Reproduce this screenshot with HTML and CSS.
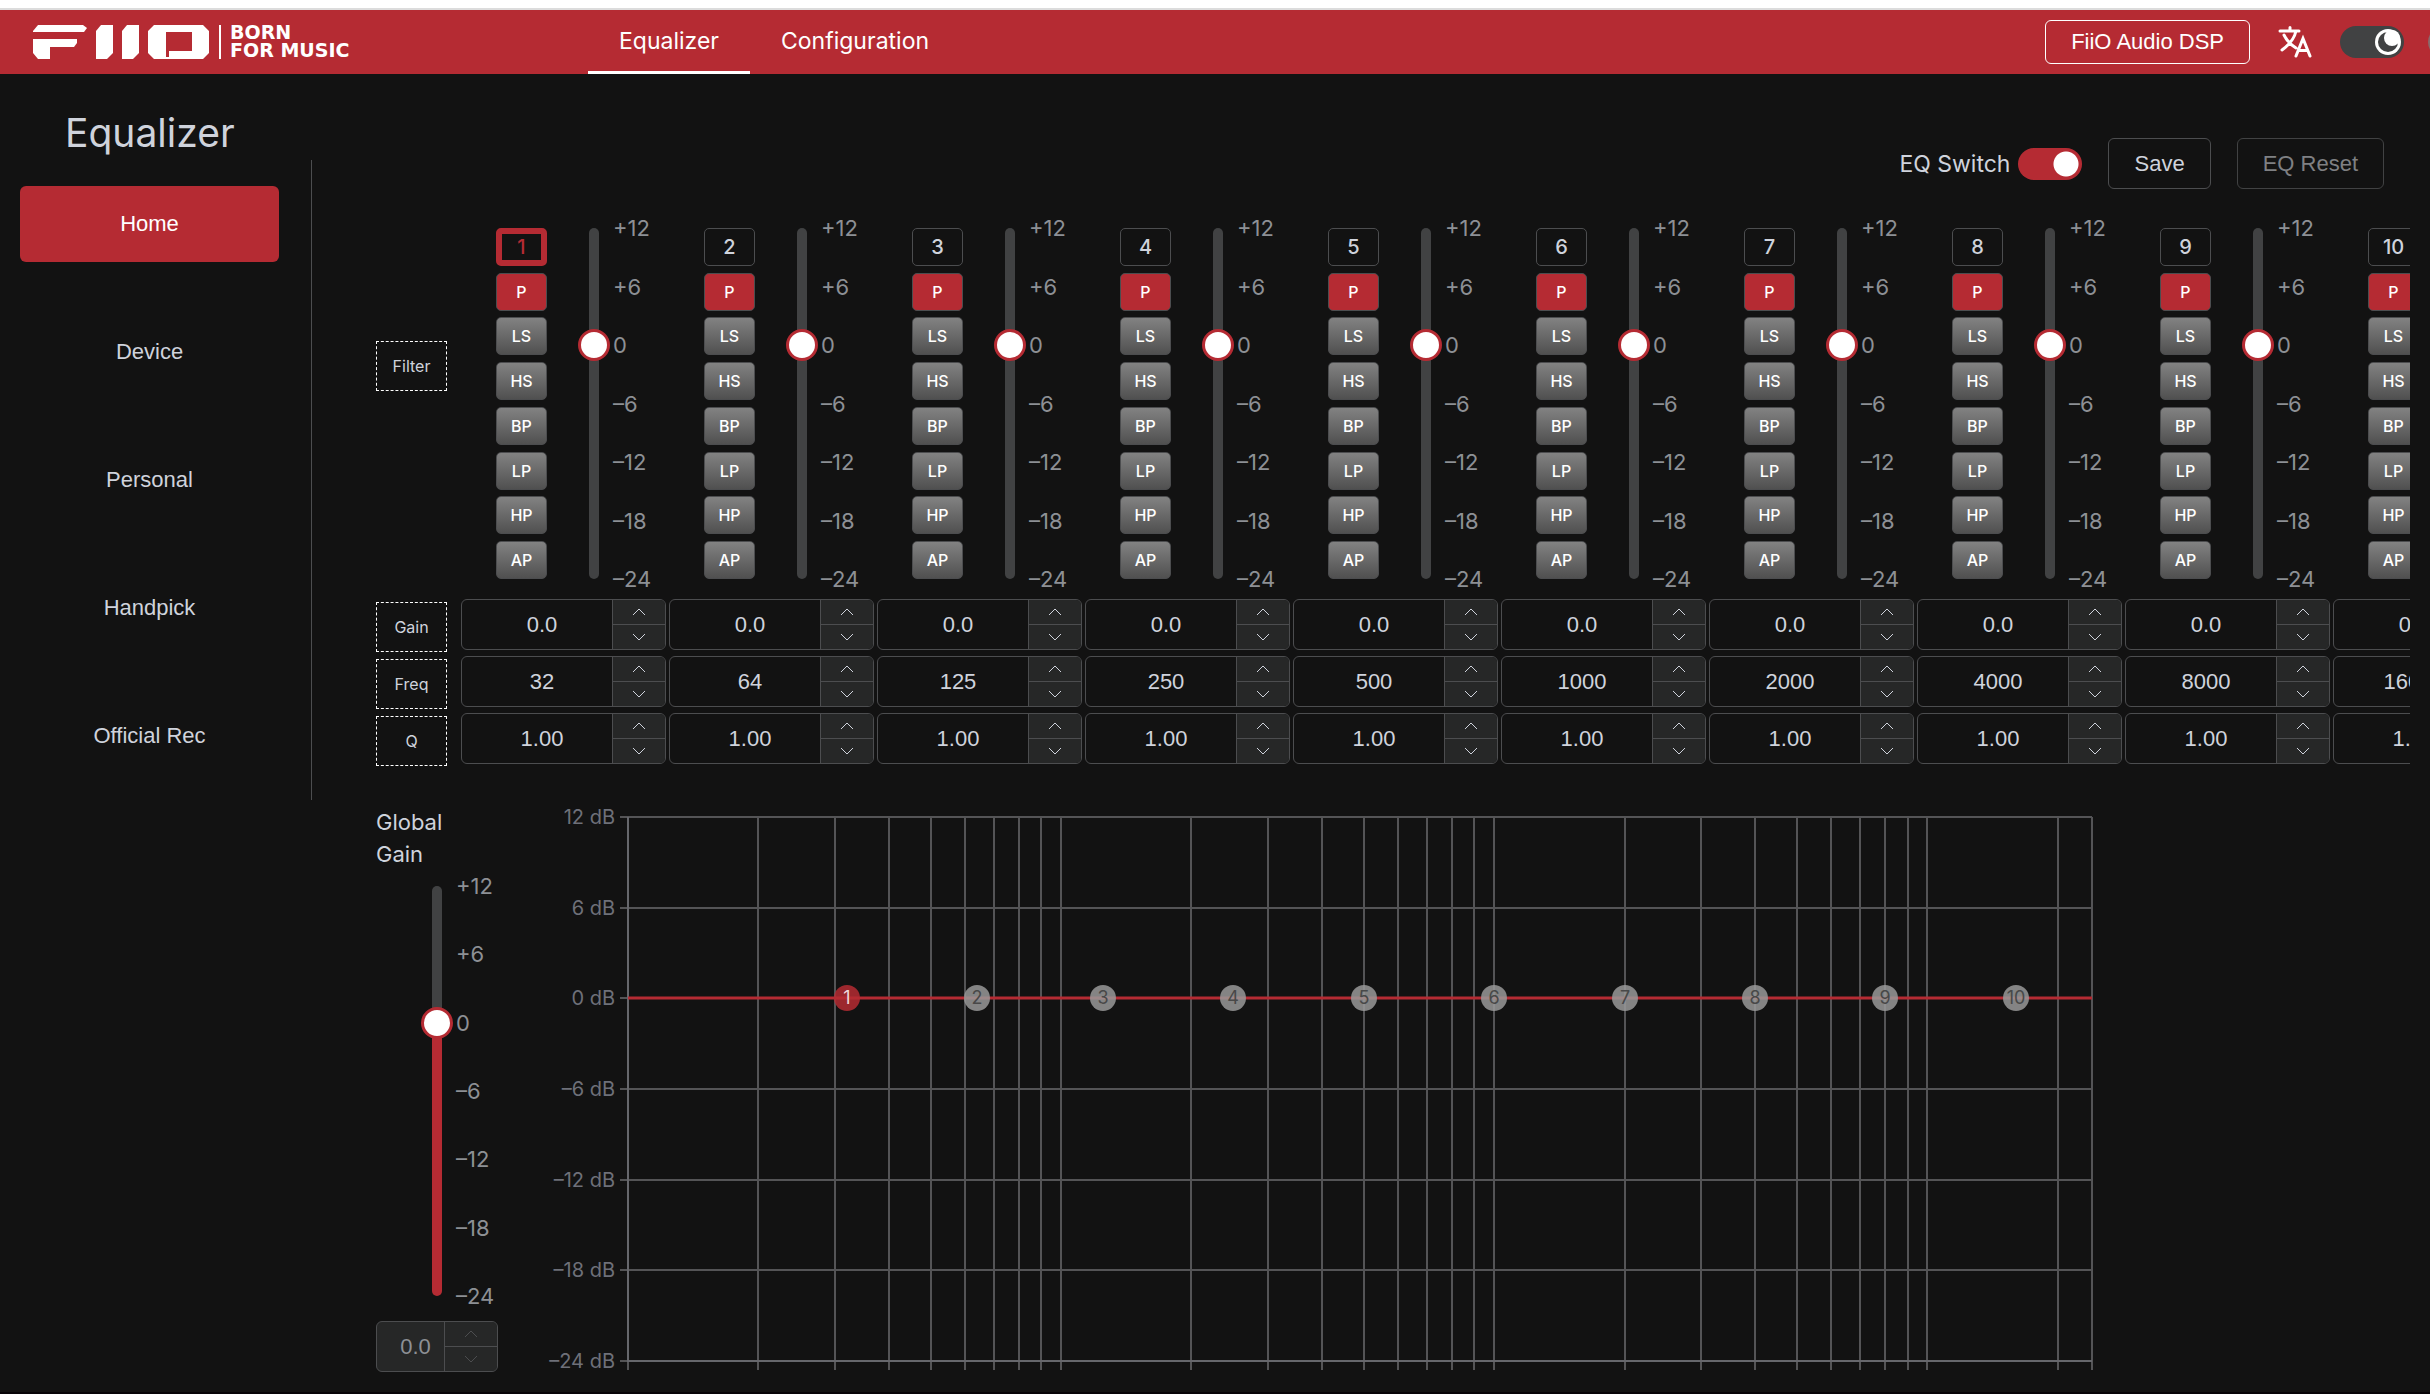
FILE: index.html
```html
<!DOCTYPE html>
<html lang="en">
<head>
  <meta charset="UTF-8" />
  <meta name="viewport" content="width=device-width, initial-scale=1.0" />
  <title>FiiO Equalizer</title>
  <link rel="stylesheet" href="styles.css">
</head>
<body>
  <header class="header">
    <svg class="logo" viewBox="0 0 330 34" role="img" aria-label="FiiO Born for Music">
      <path d="M5 0H50L54 3L51 7H0V6Z" />
      <path d="M0 14H44V18L41 22H17V34H5L0 28Z" />
      <path d="M68 0H80V28L74 34H63V6Z" />
      <path d="M94 0H106V28L100 34H89V6Z" />
      <path fill-rule="evenodd" d="M121 0H170L176 6V28L170 34H121L115 28V6ZM133 7V32H136V26H159V7Z" />
      <path d="M186 0H188V34H186Z" />
      <text x="197" y="14">BORN</text>
      <text x="197" y="32">FOR MUSIC</text>
    </svg>
    <nav class="nav">
      <a class="active" href="#equalizer">Equalizer</a>
      <a href="#configuration">Configuration</a>
    </nav>
    <div class="header-right">
      <button class="btn-device">FiiO Audio DSP</button>
      <button class="btn-lang" aria-label="Language">
        <svg viewBox="0 0 34 32">
          <path d="M2 5H21M12 1.500V5M6 9C9 15 13 19 18 22M18 5C16 14 11 19 4 24M18 30L25 12.500L32 30M20.500 24.500H29.500" />
        </svg>
      </button>
      <label class="theme">
        <input type="checkbox" checked aria-label="Dark mode">
        <svg viewBox="0 0 26 26">
          <circle cx="13" cy="13" r="13" fill="#fff" />
          <circle cx="13" cy="13" r="10" fill="#414243" />
          <circle cx="17" cy="9" r="8" fill="#fff" />
        </svg>
      </label>
      <span class="theme-next"></span>
    </div>
  </header>

  <div class="layout">
    <aside class="sidebar">
      <h1>Equalizer</h1>
      <nav class="menu">
        <button class="active">Home</button>
        <button>Device</button>
        <button>Personal</button>
        <button>Handpick</button>
        <button>Official Rec</button>
      </nav>
    </aside>

    <main class="content" id="equalizer">
      <div class="toolbar">
        <label class="eq-switch">EQ Switch <input type="checkbox" checked></label>
        <button>Save</button>
        <button disabled>EQ Reset</button>
      </div>

      <section class="eq">
        <div class="row-labels">
          <span class="filter-label">Filter</span>
          <span>Gain</span>
          <span>Freq</span>
          <span>Q</span>
        </div>
        <div class="bands" id="bands"></div>
      </section>

      <section class="bottom">
        <div class="global">
          <label for="globalGain">Global<br>Gain</label>
          <div class="global-slider" id="globalSlider"></div>
          <div id="globalNumber"></div>
        </div>
        <svg class="chart" id="chart" viewBox="0 0 1560 570"></svg>
      </section>
    </main>
  </div>

  <script src="script.js"></script>
</body>
</html>
```

FILE: styles.css
```css
* {
  box-sizing: border-box;
}

body {
  margin: 0;
  min-height: 100vh;
  border-top: 8px solid #fff;
  border-bottom: 5px solid #070408;
  background-color: #121212;
  color: #cfd3dc;
  font-family: Inter, "Liberation Sans", sans-serif;
  font-size: 22px;
  overflow-x: hidden;
}

button, .number input {
  font-family: "Liberation Sans", Arial, sans-serif;
  font-size: 22px;
  color: #cfd3dc;
}

button {
  background: none;
  border: none;
  padding: 0;
  cursor: pointer;
}

/* header */
.header {
  display: flex;
  align-items: center;
  height: 66px;
  padding-left: 33px;
  border-top: 2px solid #dcdcdc;
  background-color: #b52b33;
  overflow: hidden;
}

.logo {
  flex: none;
  width: 330px;
  height: 34px;
  margin-right: 225px;
  fill: #fff;
  overflow: visible;
}

.logo text {
  font-family: "DejaVu Sans", sans-serif;
  font-size: 19px;
  font-weight: bold;
}

.nav {
  display: flex;
  align-self: stretch;
  font-size: 23px;
}

.nav a {
  display: flex;
  align-items: center;
  padding: 0 31px;
  border-bottom: 3px solid transparent;
  color: #fff;
  text-decoration: none;
}

.nav a.active {
  border-bottom-color: #fff;
}

.header-right {
  display: flex;
  align-items: center;
  margin-left: auto;
  margin-right: -62px;
}

.btn-device {
  height: 44px;
  padding: 0 25px;
  border: 1px solid #fff;
  border-radius: 6px;
  color: #fff;
}

.btn-lang {
  width: 34px;
  height: 32px;
  margin: 0 28px;
}

.btn-lang svg {
  display: block;
  fill: none;
  stroke: #fff;
  stroke-width: 3;
  stroke-linecap: round;
}

.theme {
  display: grid;
  align-items: center;
  margin-right: 24px;
}

.theme > * {
  grid-area: 1 / 1;
}

.theme svg {
  width: 26px;
  height: 26px;
  justify-self: end;
  margin-right: 3px;
}

input[type="checkbox"] {
  appearance: none;
  width: 64px;
  height: 32px;
  margin: 0;
  border-radius: 16px;
  background-color: #414243;
}

.theme-next {
  flex: none;
  width: 64px;
  height: 32px;
  border-radius: 16px;
  background-color: #8a6a6c;
}

/* sidebar */
.layout {
  display: flex;
  align-items: flex-start;
}

.sidebar {
  flex: none;
  width: 312px;
}

.sidebar h1 {
  margin: 0;
  padding: 37px 0 5px 65px;
  font-size: 39px;
  font-weight: 400;
  line-height: 44px;
}

.menu {
  display: flex;
  flex-direction: column;
  gap: 52px;
  padding: 26px 32px 26px 20px;
  border-right: 1px solid #4c4d4f;
}

.menu button {
  height: 76px;
  border-radius: 6px;
}

.menu button.active {
  background-color: #b52b33;
  color: #fff;
}

/* content */
.content {
  flex: 1;
  min-width: 0;
  padding: 64px 20px 16px 64px;
}

.toolbar {
  display: flex;
  justify-content: flex-end;
  align-items: center;
  gap: 26px;
  padding-right: 26px;
  margin-bottom: 23px;
}

.toolbar button {
  height: 51px;
  padding: 0 25px;
  border: 1px solid #4c4d4f;
  border-radius: 6px;
}

.toolbar button:disabled {
  color: #7f8083;
  border-color: #414243;
}

.eq-switch {
  display: flex;
  align-items: center;
  gap: 8px;
  font-size: 23px;
}

.eq-switch input {
  background: radial-gradient(circle at 48px 16px, #fff 12px, #b52b33 13px);
}

.eq {
  display: flex;
  gap: 14px;
}

.row-labels {
  flex: none;
  display: flex;
  flex-direction: column;
  gap: 7px;
  width: 71px;
}

.row-labels span {
  display: flex;
  align-items: center;
  justify-content: center;
  height: 50px;
  border: 1px dashed #fff;
  font-size: 16px;
}

.row-labels .filter-label {
  margin: 129px 0 204px;
}

.bands {
  display: flex;
  gap: 3px;
  flex: 1;
  min-width: 0;
  overflow: hidden;
}

.band {
  flex: none;
  width: 205px;
  display: flex;
  flex-direction: column;
  gap: 6px;
}

.band-top {
  display: flex;
  height: 381px;
  padding-left: 35px;
}

.filters {
  display: flex;
  flex-direction: column;
  justify-content: space-between;
  width: 51px;
  height: 383px;
  padding: 16px 0;
  margin-right: 31px;
}

.filters button {
  height: 38px;
  border: 1px solid #4c4d4f;
  border-radius: 5px;
  background: linear-gradient(#828282, #505050);
  color: #fff;
  font-family: Inter, sans-serif;
  font-size: 16px;
  font-weight: 500;
}

.filters button.on {
  background: #b52b33;
}

.filters .band-no {
  background: none;
  color: #cfd3dc;
  font-size: 20px;
}

.band.selected .band-no {
  border: 6px solid #b52b33;
  color: #b52b33;
}

/* vertical slider, the bar and the input share one cell */
.slider {
  display: grid;
  justify-items: center;
  align-items: center;
  width: 32px;
  height: 383px;
}

.slider > * {
  grid-area: 1 / 1;
}

.bar {
  width: 10px;
  height: calc(100% - 32px);
  border-radius: 5px;
  background-color: #414243;
}

.slider input {
  appearance: none;
  writing-mode: vertical-lr;
  direction: rtl;
  width: 32px;
  height: 100%;
  margin: 0;
  background: none;
}

.slider input::-webkit-slider-thumb {
  appearance: none;
  width: 32px;
  height: 32px;
  border: 3px solid #b52b33;
  border-radius: 50%;
  background-color: #fff;
}

.marks {
  display: flex;
  flex-direction: column;
  justify-content: space-between;
  height: 383px;
  margin-left: 3px;
  line-height: 32px;
  color: #8d9095;
}

.number {
  display: flex;
  height: 51px;
  border: 1px solid #4c4d4f;
  border-radius: 6px;
  overflow: hidden;
}

.number input {
  flex: 1;
  min-width: 0;
  padding: 0 0 0 10px;
  border: none;
  background: none;
  text-align: center;
}

.steps {
  display: flex;
  flex-direction: column;
  width: 53px;
  border-left: 1px solid #4c4d4f;
  background-color: #262727;
}

.steps button {
  flex: 1;
  display: flex;
  align-items: center;
  justify-content: center;
}

.steps button + button {
  border-top: 1px solid #4c4d4f;
}

.steps svg {
  width: 14px;
  height: 8px;
  fill: none;
  stroke: #cfd3dc;
}

/* global gain and chart */
.bottom {
  display: flex;
  gap: 40px;
  margin-top: 40px;
}

.global {
  flex: none;
  width: 122px;
  line-height: 32px;
}

.global-slider {
  display: flex;
  padding-left: 45px;
  margin-bottom: 9px;
}

.global-slider .slider,
.global-slider .marks {
  height: 442px;
}

.global-slider .bar {
  background: linear-gradient(#414243 33%, #b52b33 33%);
}

.global .number {
  background-color: #262727;
}

.global .number input {
  color: #8d9095;
}

.global .steps svg {
  stroke: #4c4d4f;
}

.chart {
  flex: 1;
  min-width: 0;
  max-width: 1560px;
  align-self: flex-start;
}

.chart .grid {
  stroke: #545456;
  stroke-width: 2;
}

.chart .axis {
  stroke: #66676c;
  stroke-width: 2;
}

.chart .curve {
  stroke: #b52b33;
  stroke-width: 3;
}

.chart .tick {
  fill: #6e7079;
  font-size: 20px;
  text-anchor: end;
}

.chart .node {
  fill: #999;
  opacity: 0.85;
}

.chart .node-text {
  fill: #484848;
  font-size: 18px;
  text-anchor: middle;
}

.chart .node.selected {
  fill: #b52b33;
}

.chart .node-text.selected {
  fill: #f0d8da;
}
```

FILE: script.js
```js
const freqs = [32, 64, 125, 250, 500, 1000, 2000, 4000, 8000, 16000];
const types = ["P", "LS", "HS", "BP", "LP", "HP", "AP"];
const marks = ["+12", "+6", "0", "–6", "–12", "–18", "–24"];

function sliderHtml(label, id) {
  return `
    <div class="slider">
      <span class="bar"></span>
      <input type="range" min="-24" max="12" step="0.1" value="0" aria-label="${label}" ${id ? `id="${id}" disabled` : ""}>
    </div>
    <div class="marks">${marks.map(m => `<span>${m}</span>`).join("")}</div>`;
}

function numberHtml(label, value, disabled) {
  const off = disabled ? "disabled" : "";
  return `
    <div class="number">
      <input type="text" inputmode="decimal" value="${value}" aria-label="${label}" ${off}>
      <div class="steps">
        <button aria-label="Increase" ${off}><svg viewBox="0 0 14 8"><path d="M1 7L7 1L13 7" /></svg></button>
        <button aria-label="Decrease" ${off}><svg viewBox="0 0 14 8"><path d="M1 1L7 7L13 1" /></svg></button>
      </div>
    </div>`;
}

document.getElementById("bands").innerHTML = freqs.map((freq, i) => `
  <div class="band ${i === 0 ? "selected" : ""}">
    <div class="band-top">
      <div class="filters">
        <button class="band-no">${i + 1}</button>
        ${types.map(t => `<button class="${t === "P" ? "on" : ""}">${t}</button>`).join("")}
      </div>
      ${sliderHtml(`Band ${i + 1} gain`)}
    </div>
    ${numberHtml(`Band ${i + 1} gain`, "0.0")}
    ${numberHtml(`Band ${i + 1} frequency`, freq)}
    ${numberHtml(`Band ${i + 1} Q`, "1.00")}
  </div>`).join("");

document.getElementById("globalSlider").innerHTML = sliderHtml("Global gain", "globalGain");
document.getElementById("globalNumber").innerHTML = numberHtml("Global gain value", "0.0", true);

// response chart: log scale from 10 Hz to 24 kHz, +12 dB to -24 dB
const plot = { left: 90, right: 1554, top: 11, bottom: 555 };
const xOf = f => Math.round(plot.left + (plot.right - plot.left) * Math.log10(f / 10) / Math.log10(2400));
const yOf = db => Math.round(plot.top + (plot.bottom - plot.top) * (12 - db) / 36);

let svg = "";
for (let decade = 10; decade <= 10000; decade *= 10) {
  for (let n = 1; n < 10; n++) {
    const f = decade * n;
    if (f > 20000) break;
    svg += `<line class="grid" x1="${xOf(f)}" x2="${xOf(f)}" y1="${plot.top}" y2="${plot.bottom + 9}" />`;
  }
}
svg += `<line class="grid" x1="${plot.right}" x2="${plot.right}" y1="${plot.top}" y2="${plot.bottom + 9}" />`;

for (let db = 12; db >= -24; db -= 6) {
  const y = yOf(db);
  svg += `<line class="grid" x1="${plot.left - 8}" x2="${plot.right}" y1="${y}" y2="${y}" />`;
  svg += `<text class="tick" x="77" y="${y + 7}">${db < 0 ? "–" + -db : db} dB</text>`;
}
svg += `<path class="axis" fill="none" d="M${plot.left} ${plot.top}V${plot.bottom}H${plot.right}" />`;
svg += `<line class="curve" x1="${plot.left}" x2="${plot.right}" y1="${yOf(0)}" y2="${yOf(0)}" />`;

freqs.forEach((f, i) => {
  const state = i === 0 ? "selected" : "";
  svg += `<circle class="node ${state}" cx="${xOf(f)}" cy="${yOf(0)}" r="13" />`;
  svg += `<text class="node-text ${state}" x="${xOf(f)}" y="${yOf(0) + 6}">${i + 1}</text>`;
});
document.getElementById("chart").innerHTML = svg;
```
